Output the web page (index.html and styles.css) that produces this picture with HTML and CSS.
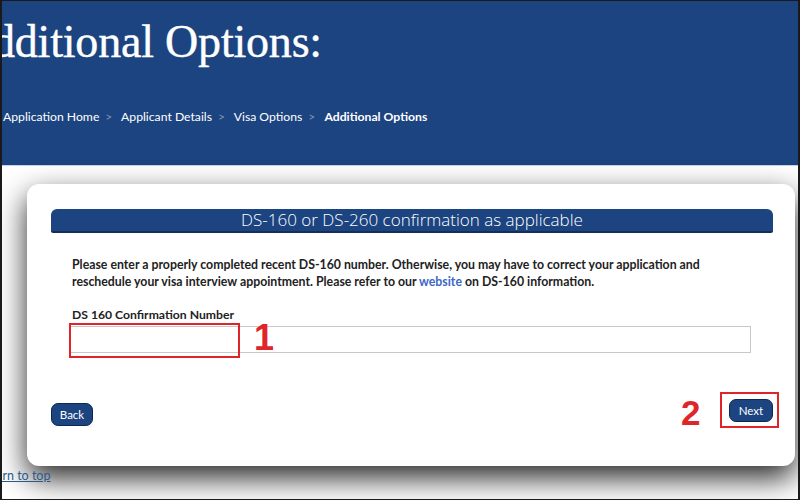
FILE: index.html
```html
<!DOCTYPE html>
<html lang="en">
<head>
<meta charset="utf-8">
<title>Additional Options</title>
<link rel="stylesheet" href="styles.css">
</head>
<body>
<div class="frame">
  <header class="header">
    <h1 class="title">Additional Options:</h1>
    <nav class="crumbs">
      <span class="crumb">Application Home</span><span class="sep">&gt;</span>
      <span class="crumb">Applicant Details</span><span class="sep">&gt;</span>
      <span class="crumb">Visa Options</span><span class="sep">&gt;</span>
      <span class="crumb current">Additional Options</span>
    </nav>
  </header>
  <main class="main">
    <section class="card">
      <div class="bar">DS-160 or DS-260 confirmation as applicable</div>
      <div class="body">
        <p class="note">Please enter a properly completed recent DS-160 number. Otherwise, you may have to correct your application and reschedule your visa interview appointment. Please refer to our <a class="link" href="#">website</a> on DS-160 information.</p>
        <label class="label" for="ds160">DS 160 Confirmation Number</label>
        <div class="field">
          <input class="input" id="ds160" type="text">
          <span class="mark mark-1"></span>
          <span class="num num-1">1</span>
        </div>
      </div>
      <div class="actions">
        <button class="btn back" type="button">Back</button>
        <div class="next-wrap">
          <button class="btn next" type="button">Next</button>
          <span class="mark mark-2"></span>
          <span class="num num-2">2</span>
        </div>
      </div>
    </section>
    <a class="totop" href="#">Return to top</a>
  </main>
</div>
</body>
</html>
```
FILE: styles.css
```css
* { box-sizing: border-box; }
html, body { margin: 0; padding: 0; }
body { background: #ffffff; }

.frame {
  width: 800px;
  height: 500px;
  overflow: hidden;
  border: 1px solid #1a1a1a;
  border-left-width: 2px;
  border-right-width: 2px;
  background: #ffffff;
}

.header {
  height: 165px;
  background: #1c4480;
  padding-top: 15px;
  border-bottom: 1px solid #c6d3e2;
  overflow: hidden;
}

.title {
  margin: 0;
  font-family: "Liberation Serif", "DejaVu Serif", serif;
  font-weight: 400;
  font-size: 46px;
  line-height: 52px;
  color: #ffffff;
  text-indent: -43px;
  white-space: nowrap;
  letter-spacing: -0.2px;
  -webkit-text-stroke: 0.4px #ffffff;
}

.crumbs {
  margin-top: 40px;
  padding-left: 1px;
  font-family: Lato, "Open Sans", sans-serif;
  font-size: 12.2px;
  line-height: 18px;
  color: #ffffff;
  white-space: nowrap;
}
.crumb { display: inline; }
.crumb.current { font-weight: 700; }
.sep {
  color: #7f93b3;
  margin: 0 6px;
}

.main {
  padding: 18px 0 0 25px;
}

.card {
  width: 768px;
  height: 282px;
  background: #ffffff;
  border-radius: 12px;
  box-shadow: 0 12px 30px rgba(0, 0, 0, 0.85);
  padding: 25px 22px 0 24px;
}

.bar {
  height: 24px;
  background: #1c4480;
  border-bottom: 2px solid #132f5a;
  border-radius: 6px 6px 2px 2px;
  color: #ffffff;
  text-align: center;
  font-family: "Open Sans", sans-serif;
  font-weight: 300;
  font-size: 17px;
  line-height: 22px;
}

.body {
  padding: 0 22px 0 19px;
}

.note {
  margin: 23px 0 0 2px;
  font-family: Lato, "Open Sans", sans-serif;
  font-weight: 700;
  font-size: 12.3px;
  line-height: 17px;
  color: #222222;
}
.link {
  color: #3a67c8;
  text-decoration: none;
}

.label {
  display: block;
  margin: 16px 0 0 2px;
  font-family: Lato, "Open Sans", sans-serif;
  font-weight: 700;
  font-size: 12.2px;
  line-height: 17px;
  color: #222222;
}

.field {
  position: relative;
  margin-top: 3px;
}
.input {
  display: block;
  width: 100%;
  height: 27px;
  border: 1px solid #c8c8c8;
  background: #ffffff;
  margin: 0;
  padding: 0 6px;
}

.mark {
  position: absolute;
  border: 2px solid #e0252a;
}
.mark-1 { left: -1px; top: -3px; width: 171px; height: 35px; }

.num {
  position: absolute;
  font-family: "Liberation Sans", Arial, sans-serif;
  font-weight: 700;
  font-size: 36px;
  line-height: 36px;
  color: #e0252a;
}
.num-1 { left: 184px; top: -6px; }

.actions {
  display: flex;
  justify-content: space-between;
  align-items: flex-start;
  margin-top: 46px;
}

.btn {
  font-family: Lato, "Open Sans", sans-serif;
  font-size: 11.5px;
  color: #ffffff;
  background: #1c4480;
  border: 1px solid #0f2850;
  border-radius: 7px;
  height: 23px;
  padding: 0;
  line-height: 21px;
}
.back { width: 42px; margin-top: 4px; }
.next { width: 44px; }

.next-wrap { position: relative; }
.mark-2 { left: -9px; top: -7px; width: 59px; height: 36px; }
.num-2 { left: -48px; top: -4px; font-size: 35px; }

.totop {
  display: block;
  margin: 2px 0 0 -50px;
  font-family: Lato, "Open Sans", sans-serif;
  font-size: 12.5px;
  line-height: 16px;
  color: #2a5a8c;
  text-decoration: underline;
}
```
